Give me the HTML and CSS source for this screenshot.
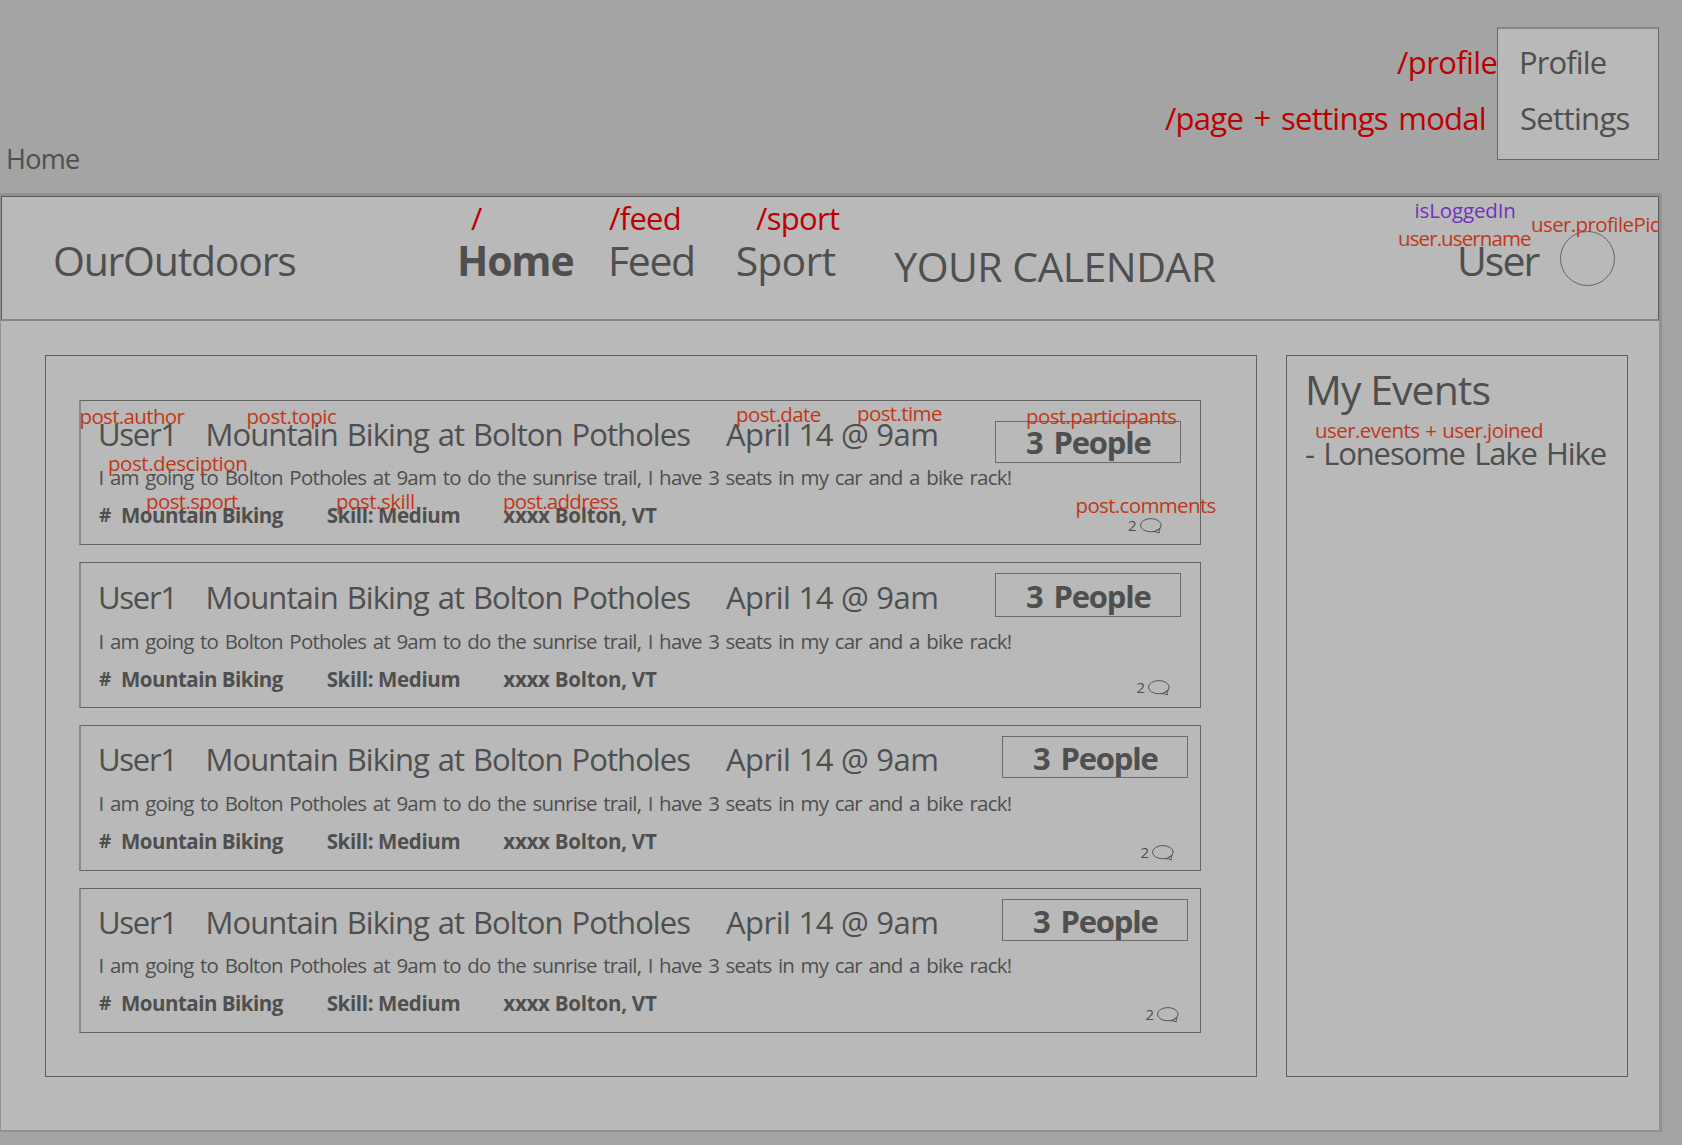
FILE: index.html
```html
<!DOCTYPE html>
<html lang="en">
<head>
<meta charset="utf-8">
<title>OurOutdoors – Home</title>
<link rel="stylesheet" href="styles.css">
</head>
<body>
<svg width="0" height="0" class="defs" aria-hidden="true">
  <symbol id="bubble" viewBox="0 0 22 16">
    <ellipse cx="10.8" cy="7.2" rx="10.3" ry="6.6"/>
    <path d="M13.2 13.6C15.4 13.6 17 14.3 19.4 14.8C19.1 12.8 19.6 11.4 20.3 9.4M15.8 13L20.2 10"/>
  </symbol>
</svg>
<div class="board">
  <header class="top">
    <span class="caption">Home</span>
    <div class="menu">
      <span class="menu-item profile">Profile</span>
      <span class="menu-item settings">Settings</span>
    </div>
  </header>

  <div class="app">
    <nav class="nav">
      <span class="brand">OurOutdoors</span>
      <strong class="nav-home">Home</strong>
      <span class="nav-feed">Feed</span>
      <span class="nav-sport">Sport</span>
      <span class="nav-calendar">YOUR CALENDAR</span>
      <span class="nav-user">User</span>
      <span class="avatar"></span>
    </nav>

    <main class="main">
      <section class="feed">
        <article class="card first">
          <div class="head"><span class="author">User1</span><span class="topic">Mountain Biking at Bolton Potholes</span><span class="date">April 14 @ 9am</span><strong class="people">3 People</strong></div>
          <p class="desc">I am going to Bolton Potholes at 9am to do the sunrise trail, I have 3 seats in my car and a bike rack!</p>
          <div class="tags"><b class="hash">#</b><b class="sport">Mountain Biking</b><b class="skill">Skill: Medium</b><b class="address">xxxx Bolton, VT</b><span class="comments">2<svg class="bubble"><use href="#bubble"/></svg></span></div>
        </article>
        <article class="card second">
          <div class="head"><span class="author">User1</span><span class="topic">Mountain Biking at Bolton Potholes</span><span class="date">April 14 @ 9am</span><strong class="people">3 People</strong></div>
          <p class="desc">I am going to Bolton Potholes at 9am to do the sunrise trail, I have 3 seats in my car and a bike rack!</p>
          <div class="tags"><b class="hash">#</b><b class="sport">Mountain Biking</b><b class="skill">Skill: Medium</b><b class="address">xxxx Bolton, VT</b><span class="comments">2<svg class="bubble"><use href="#bubble"/></svg></span></div>
        </article>
        <article class="card third">
          <div class="head"><span class="author">User1</span><span class="topic">Mountain Biking at Bolton Potholes</span><span class="date">April 14 @ 9am</span><strong class="people">3 People</strong></div>
          <p class="desc">I am going to Bolton Potholes at 9am to do the sunrise trail, I have 3 seats in my car and a bike rack!</p>
          <div class="tags"><b class="hash">#</b><b class="sport">Mountain Biking</b><b class="skill">Skill: Medium</b><b class="address">xxxx Bolton, VT</b><span class="comments">2<svg class="bubble"><use href="#bubble"/></svg></span></div>
        </article>
        <article class="card fourth">
          <div class="head"><span class="author">User1</span><span class="topic">Mountain Biking at Bolton Potholes</span><span class="date">April 14 @ 9am</span><strong class="people">3 People</strong></div>
          <p class="desc">I am going to Bolton Potholes at 9am to do the sunrise trail, I have 3 seats in my car and a bike rack!</p>
          <div class="tags"><b class="hash">#</b><b class="sport">Mountain Biking</b><b class="skill">Skill: Medium</b><b class="address">xxxx Bolton, VT</b><span class="comments">2<svg class="bubble"><use href="#bubble"/></svg></span></div>
        </article>
      </section>
      <aside class="events">
        <h2 class="events-title">My Events</h2>
        <p class="event">- Lonesome Lake Hike</p>
      </aside>
    </main>
  </div>

  <!-- route and data annotations pinned over the wireframe -->
  <span class="route r-profile">/profile</span>
  <span class="route r-settings">/page + settings modal</span>
  <span class="route r-home">/</span>
  <span class="route r-feed">/feed</span>
  <span class="route r-sport">/sport</span>
  <span class="note n-logged">isLoggedIn</span>
  <span class="note n-pic">user.profilePic</span>
  <span class="note n-username">user.username</span>
  <span class="note n-author">post.author</span>
  <span class="note n-topic">post.topic</span>
  <span class="note n-desc">post.desciption</span>
  <span class="note n-sport">post.sport</span>
  <span class="note n-skill">post.skill</span>
  <span class="note n-date">post.date</span>
  <span class="note n-time">post.time</span>
  <span class="note n-participants">post.participants</span>
  <span class="note n-address">post.address</span>
  <span class="note n-comments">post.comments</span>
  <span class="note n-events">user.events + user.joined</span>
</div>
</body>
</html>
```
FILE: styles.css
```css
* { box-sizing: border-box; }

body {
  margin: 0;
  background: #a4a4a4;
  color: #4f4f4f;
  font-family: "Open Sans", "Noto Sans", sans-serif;
  font-size: 31px;
  line-height: 32px;
  white-space: nowrap;
}

h2, p { margin: 0; font-weight: 400; }
.defs { position: absolute; }

.board {
  position: relative;
  width: 1682px;
  height: 1145px;
  overflow: hidden;
}

/* top strip */
.top {
  display: flex;
  justify-content: space-between;
  height: 193px;
  padding: 27px 23px 0 6px;
}
.caption {
  margin-top: 118px;
  font-size: 27px;
  line-height: 28px;
  letter-spacing: -0.72px;
}
.menu {
  display: flex;
  flex-direction: column;
  gap: 24px;
  width: 162px;
  height: 133px;
  padding: 17px 0 0 21px;
  background: #b9b9b9;
  border: 1px solid #666;
  border-top: 2px solid #868686;
}
.profile { letter-spacing: -0.9px; }
.settings { padding-left: 1px; letter-spacing: -0.65px; }

/* application frame */
.app {
  width: 1662px;
  height: 939px;
  background: #b9b9b9;
  border: solid #929292;
  border-width: 3px 3px 2px 1px;
}
.nav {
  display: grid;
  grid-template-columns: 404px 151px 127.7px 158.6px 562.7px 103px 55px;
  align-items: start;
  height: 125px;
  padding: 43px 0 0 51px;
  border: 1px solid #5a5a5a;
  border-bottom: 2px solid #868686;
  font-size: 41px;
  line-height: 40px;
}
.brand { letter-spacing: -1.24px; }
.nav-home { letter-spacing: -1.2px; }
.nav-feed { letter-spacing: -1.38px; }
.nav-sport { letter-spacing: -0.82px; }
.nav-calendar { margin-top: 6px; letter-spacing: -0.56px; }
.nav-user { letter-spacing: -2px; }
.avatar {
  width: 55px;
  height: 55px;
  margin-top: -9px;
  border: 1px solid #666;
  border-radius: 50%;
}

.main {
  display: flex;
  gap: 29px;
  padding: 34px 0 0 44px;
}
.feed, .events {
  height: 722px;
  border: 1px solid #5f5f5f;
}
.feed {
  display: flex;
  flex-direction: column;
  gap: 17px;
  width: 1212px;
  padding: 44px 0 0 33px;
}

/* post card */
.card {
  --top: 17px;
  --head: 49px;
  --box-x: 0px;
  --box-y: -7px;
  --box-h: 42px;
  --box-pad: 5px;
  --meta-x: 0px;
  --meta-y: 13px;
  width: 1122px;
  height: 145px;
  padding: var(--top) 0 0 17px;
  border: 1px solid #636363;
  border-left: 2px solid #888;
}
.first { --box-y: 3px; --box-pad: 4px; --meta-y: 12px; }
.second { --top: 18px; --head: 50px; --box-y: -8px; --box-h: 44px; --box-pad: 6px; --meta-x: 8.5px; --meta-y: 10px; height: 146px; }
.third { --head: 50px; --box-x: 7px; --meta-x: 12.5px; height: 146px; }
.fourth { --box-x: 7px; --meta-x: 17.5px; }

.head {
  display: grid;
  grid-template-columns: 107.5px 520.5px 269px 200px;
  align-items: start;
  height: var(--head);
}
.author { letter-spacing: -1.3px; }
.topic { letter-spacing: -0.91px; word-spacing: 1.6px; }
.date { letter-spacing: -0.5px; word-spacing: 0.5px; }
.people {
  width: 186px;
  height: var(--box-h);
  margin: var(--box-y) 0 0 var(--box-x);
  padding: var(--box-pad) 0 0 30px;
  border: 1px solid #6b6b6b;
  letter-spacing: -1.2px;
  word-spacing: 4px;
}
.desc {
  height: 38px;
  padding-left: 0.5px;
  font-size: 20.5px;
  line-height: 20px;
  letter-spacing: -0.8px;
  word-spacing: 2px;
}
.tags {
  display: grid;
  grid-template-columns: 23px 205.7px 176.6px 624.7px auto;
  align-items: start;
  font-size: 20.5px;
  line-height: 20px;
}
.hash { padding-left: 1px; font-size: 19px; }
.sport { letter-spacing: -0.5px; }
.skill { letter-spacing: -0.36px; }
.address { letter-spacing: -0.24px; }
.comments {
  display: flex;
  gap: 3px;
  margin: var(--meta-y) 0 0 var(--meta-x);
  font-size: 15px;
  line-height: 16px;
}
.bubble {
  width: 22px;
  height: 16px;
  margin-top: 1px;
  fill: none;
  stroke: #555;
  stroke-width: 1;
}

/* events column */
.events {
  width: 342px;
  padding: 13px 0 0 18px;
}
.events-title {
  height: 68px;
  font-size: 41px;
  line-height: 40px;
  letter-spacing: -0.95px;
}
.event { letter-spacing: -1.15px; word-spacing: 2.5px; }

/* annotations */
.route, .note { position: absolute; }
.route { color: #bd0000; }
.note {
  color: #c03818;
  font-size: 20.5px;
  line-height: 20px;
  letter-spacing: -0.6px;
}
.r-profile { left: 1397px; top: 46px; letter-spacing: -0.6px; }
.r-settings { left: 1165px; top: 102px; letter-spacing: -0.75px; word-spacing: 3.2px; }
.r-home { left: 471px; top: 202px; }
.r-feed { left: 609px; top: 202px; letter-spacing: -0.7px; }
.r-sport { left: 756px; top: 202px; letter-spacing: -0.7px; }
.n-logged { left: 1414.5px; top: 200px; color: #7130bd; letter-spacing: -0.14px; }
.n-pic { left: 1531px; top: 214px; }
.n-username { left: 1398px; top: 228px; letter-spacing: -0.9px; }
.n-author { left: 79.5px; top: 406px; letter-spacing: -0.65px; }
.n-topic { left: 246.5px; top: 406px; letter-spacing: -0.47px; }
.n-desc { left: 108px; top: 453px; letter-spacing: -0.45px; }
.n-sport { left: 146px; top: 491px; }
.n-skill { left: 336px; top: 491px; letter-spacing: -0.47px; }
.n-date { left: 736px; top: 404px; }
.n-time { left: 857px; top: 403px; }
.n-participants { left: 1026px; top: 406px; }
.n-address { left: 503px; top: 491px; letter-spacing: -0.7px; }
.n-comments { left: 1075.5px; top: 495px; letter-spacing: -0.65px; }
.n-events { left: 1315px; top: 420px; letter-spacing: -0.55px; word-spacing: 1px; }
```
